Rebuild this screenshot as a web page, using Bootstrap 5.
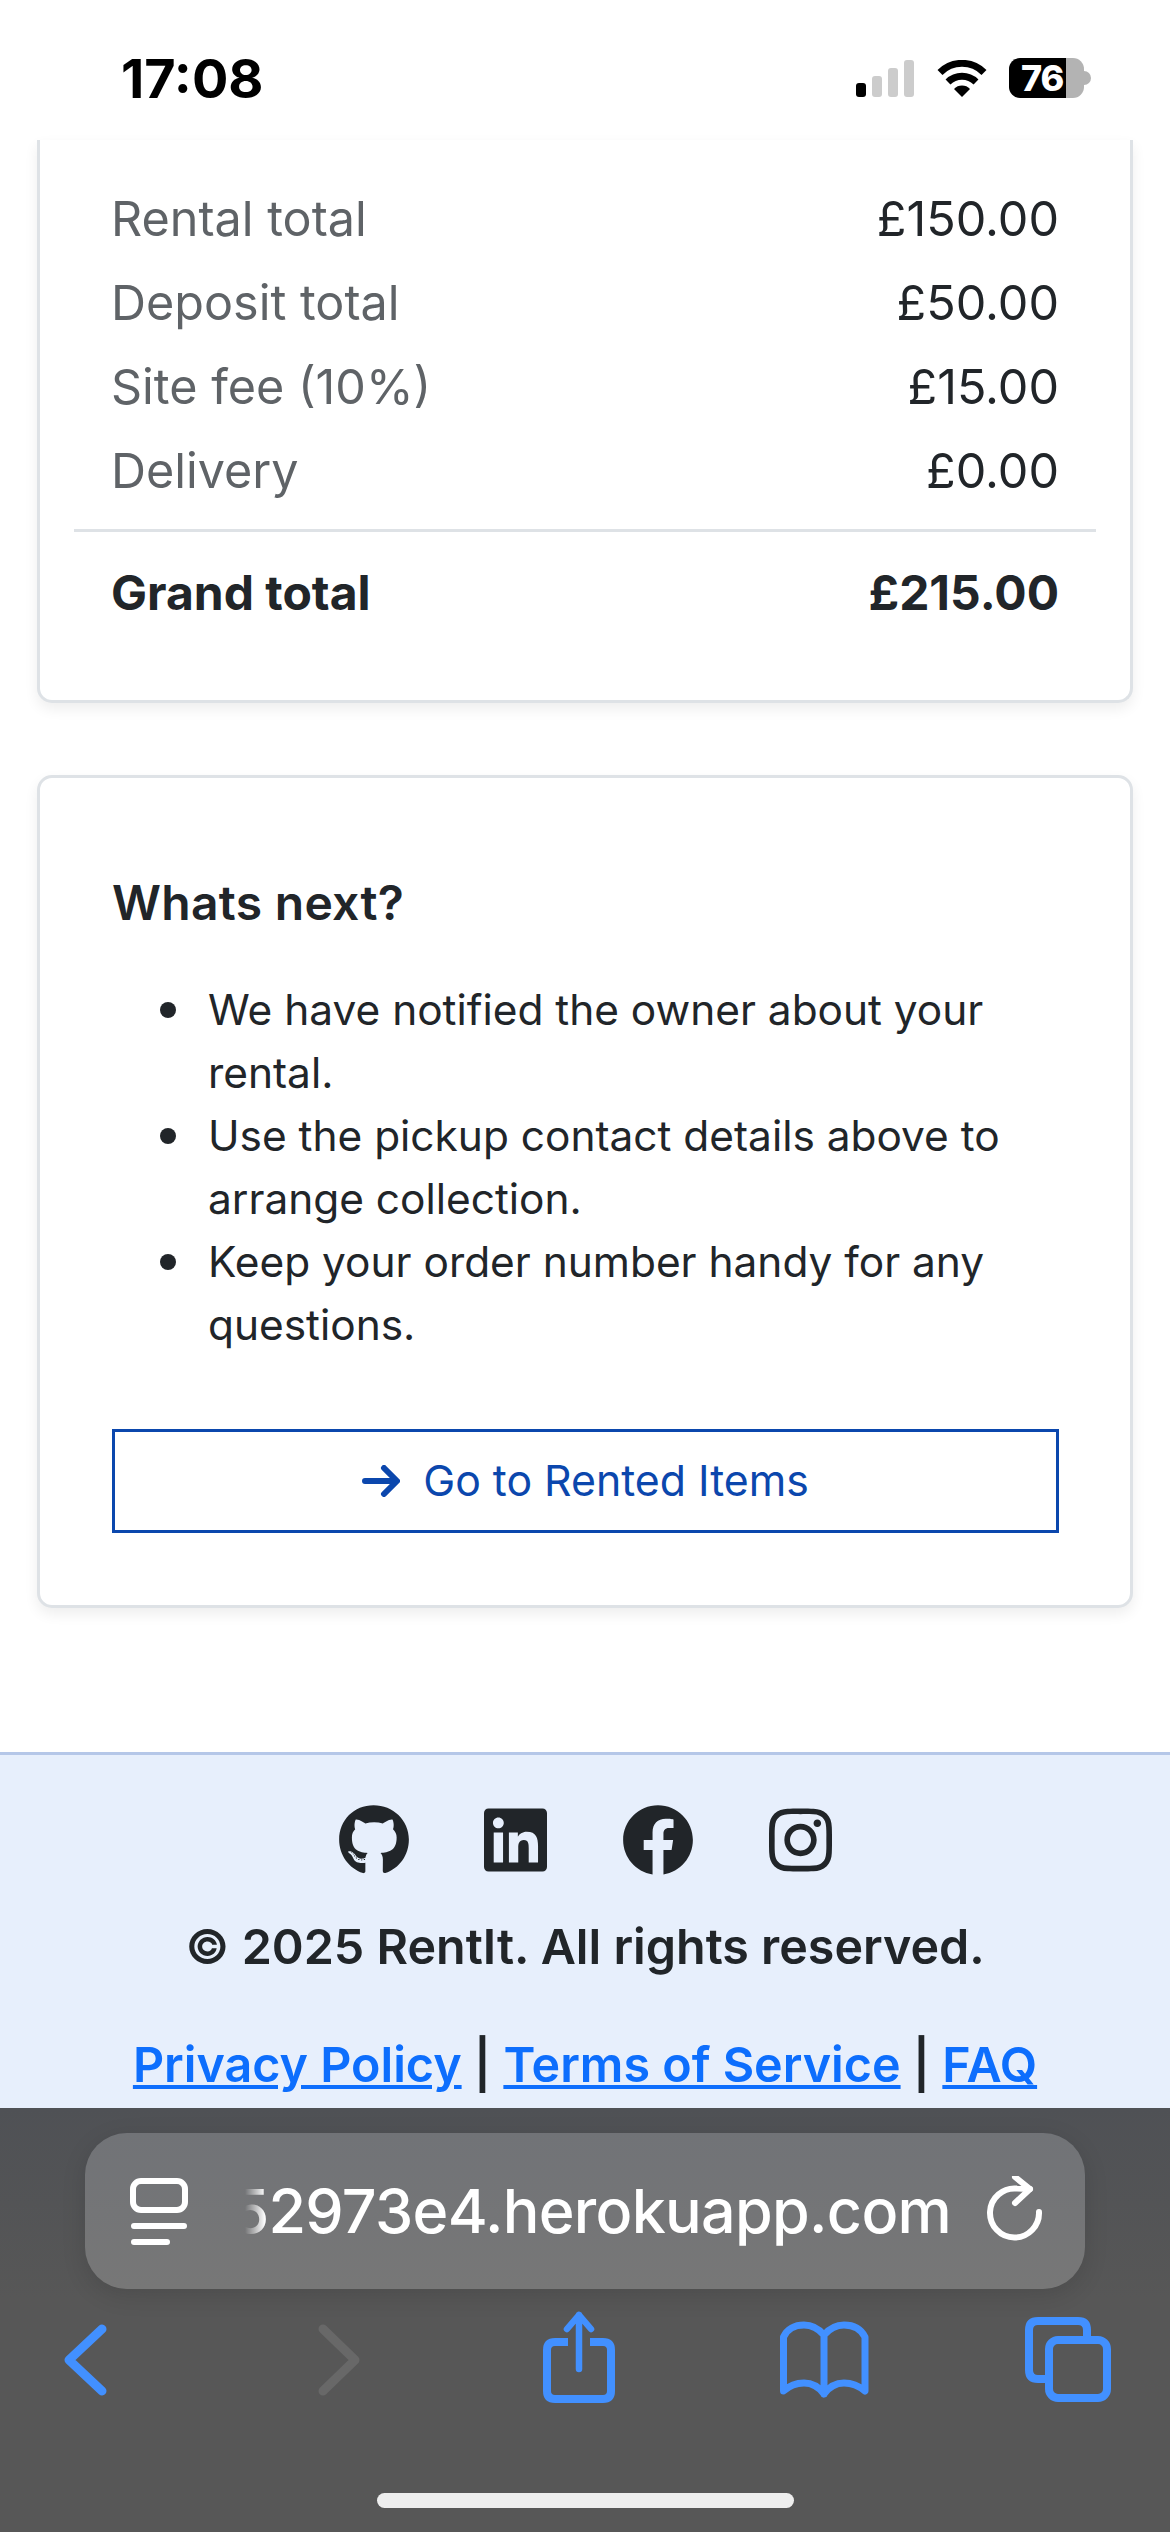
<!DOCTYPE html>
<html lang="en">
<head>
  <meta charset="UTF-8">
  <meta name="viewport" content="width=device-width, initial-scale=1.0">
  <title>Order confirmed - RentIt</title>
  <link href="https://cdn.jsdelivr.net/npm/bootstrap@5.3.0/dist/css/bootstrap.min.css" rel="stylesheet">
  <style>
    :root {
      --ink: #212529;
      --muted: #5f6367;
      --line: #dee2e6;
      --brand: #0b47ad;
    }

    body {
      font-family: "Inter", "Liberation Sans", sans-serif;
      color: var(--ink);
      background: #fff;
    }

    .phone-frame { height: 2532px; overflow: hidden; }

    /* Status bar */
    .status-strip { height: 140px; padding: 0 79px 0 121px; }
    .status-time { font-size: 54px; font-weight: 700; color: #000; line-height: 1; margin-top: 18px; }
    .status-icons { margin-top: 16px; }
    .signal-bars { gap: 6px; height: 37px; margin-right: 23px; }
    .signal-bars span { width: 10px; background: #ccc; border-radius: 3px; }
    .signal-bars span:nth-child(1) { height: 14px; background: #000; }
    .signal-bars span:nth-child(2) { height: 21px; }
    .signal-bars span:nth-child(3) { height: 29px; }
    .signal-bars span:nth-child(4) { height: 37px; }
    .battery-pill {
      width: 75px; height: 40px; margin-left: 22px; border-radius: 11px;
      background: linear-gradient(to right, #000 76%, #b3b3b3 76%);
      color: #fff; font-size: 36px; font-weight: 800; line-height: 40px;
      padding-left: 12px; letter-spacing: -1px; white-space: nowrap;
    }
    .battery-nub { width: 7px; height: 14px; background: #b3b3b3; border-radius: 0 7px 7px 0; }

    /* Page content */
    .page-scroll { min-height: 0; }
    .sheet { margin: 0 37px; border: 3px solid var(--line); border-radius: 15px; box-shadow: 0 6px 14px rgba(0, 0, 0, .07); }
    .sheet-totals { border-top: 0; border-top-left-radius: 0; border-top-right-radius: 0; padding: 37px 34px 68px; }
    .sheet-next { margin-top: 72px; padding: 96px 71px 72px 72px; }
    .money-row { height: 84px; font-size: 48.5px; padding: 0 37px; align-items: center; }
    .money-row .money-label { color: var(--muted); }
    .money-rule { border-top: 3px solid var(--line); margin: 16px 0 0; opacity: 1; height: 0; background: none; }
    .money-total { font-weight: 700; font-size: 48px; margin-top: 22px; height: 78px; }
    .money-total .money-label { color: var(--ink); }

    .next-title { font-family: "Inter", sans-serif; font-size: 48px; font-weight: 600; letter-spacing: .3px; line-height: 1.2; margin: 0 0 46px; }
    .next-list { font-size: 42.4px; line-height: 63px; padding-left: 96px; margin: 0 0 73px; list-style: none; }
    .next-list li { position: relative; }
    .next-list li::before {
      content: ""; position: absolute; left: -48px; top: 24px; width: 16px; height: 16px;
      border-radius: 50%; background: var(--ink);
    }
    .rented-btn {
      border: 3px solid var(--brand); border-radius: 0; color: var(--brand); font-size: 42.8px;
      height: 104px; gap: 23px; background: #fff;
    }

    /* Footer */
    .site-foot {
      margin-top: 144px; flex: 1 1 auto; background: #e7effc; border-top: 3px solid #b5c7e8;
      font-family: "Inter", sans-serif; font-weight: 600; font-size: 48.4px; overflow: hidden;
    }
    .foot-icons { height: 72px; margin-top: 49px; gap: 75px; }
    .foot-copy { margin: 35px 0 0; line-height: 72px; }
    .foot-links { margin: 46px 0 0; line-height: 72px; }
    .foot-links a { color: #0d6efd; }

    /* Safari chrome */
    .safari-bar { height: 424px; flex: none; background: linear-gradient(to bottom, #4f5155, #575757 45%); }
    .url-pill {
      height: 156px; margin: 25px 85px 0; border-radius: 42px; color: #fff; padding: 0 37px 0 45px;
      background: linear-gradient(to bottom, #717377, #777); box-shadow: 0 6px 24px rgba(0, 0, 0, .12);
    }
    .url-text {
      flex: none; margin: 0 36px 0 auto; white-space: nowrap; font-family: "Inter", sans-serif; font-weight: 500;
      font-size: 61px; letter-spacing: -.7px; line-height: 80px;
      -webkit-mask-image: linear-gradient(to right, transparent 14px, #000 34px);
      mask-image: linear-gradient(to right, transparent 14px, #000 34px);
    }
    .tool-row { padding-left: 35px; gap: 145px; margin-top: 18px; }
    .tool-row svg { flex: none; }
    .home-pill { width: 417px; height: 15px; border-radius: 8px; background: #eee; margin: 86px auto 0; }
  </style>
</head>

<body>
  <div class="phone-frame d-flex flex-column">

    <!-- iOS status bar -->
    <div class="status-strip d-flex justify-content-between align-items-center flex-none">
      <div class="status-time">17:08</div>
      <div class="status-icons d-flex align-items-center">
        <div class="signal-bars d-flex align-items-end"><span></span><span></span><span></span><span></span></div>
        <svg width="50" height="37" viewBox="0 0 50 37">
          <path d="M25 37l-8-8a11 11 0 0 1 16 0z" fill="#000"/>
          <path d="M11 22a20 20 0 0 1 28 0M3 12.500a31 31 0 0 1 44 0" fill="none" stroke="#000" stroke-width="7"/>
        </svg>
        <div class="battery-pill">76</div>
        <div class="battery-nub"></div>
      </div>
    </div>

    <div class="page-scroll flex-grow-1 d-flex flex-column">
      <div class="sheet sheet-totals card">
        <div class="money-row d-flex justify-content-between"><span class="money-label">Rental total</span><span>£150.00</span></div>
        <div class="money-row d-flex justify-content-between"><span class="money-label">Deposit total</span><span>£50.00</span></div>
        <div class="money-row d-flex justify-content-between"><span class="money-label">Site fee (10%)</span><span>£15.00</span></div>
        <div class="money-row d-flex justify-content-between"><span class="money-label">Delivery</span><span>£0.00</span></div>
        <hr class="money-rule">
        <div class="money-row money-total d-flex justify-content-between"><span class="money-label">Grand total</span><span>£215.00</span></div>
      </div>

      <div class="sheet sheet-next card">
        <h5 class="next-title">Whats next?</h5>
        <ul class="next-list">
          <li>We have notified the owner about your rental.</li>
          <li>Use the pickup contact details above to arrange collection.</li>
          <li>Keep your order number handy for any questions.</li>
        </ul>
        <a href="#" class="btn rented-btn d-flex align-items-center justify-content-center">
          <svg width="38" height="32" viewBox="0 0 38 32" fill="none" stroke="currentColor" stroke-width="6" stroke-linecap="round" stroke-linejoin="round"><path d="M3 16h31M22 3l13 13-13 13"/></svg>
          Go to Rented Items
        </a>
      </div>

      <footer class="site-foot text-center">
        <div class="foot-icons d-flex justify-content-center align-items-center">
          <svg width="70" height="72" viewBox="0 0 496 512" fill="currentColor"><path d="M165.900 397.400c0 2-2.300 3.600-5.200 3.600-3.300 0-5.600-1.600-5.600-3.600 0-2 2.300-3.600 5.200-3.600 3-.3 5.600 1.300 5.600 3.600zm-31.100-4.500c-.7 2 1.300 4.300 4.300 4.900 2.600 1 5.600 0 6.200-2s-1.300-4.300-4.300-5.200c-2.600-.7-5.500.3-6.200 2.300zm44.200-1.700c-2.900.7-4.900 2.600-4.600 4.900.3 2 2.900 3.300 5.900 2.600 2.900-.7 4.900-2.600 4.600-4.600-.3-1.900-3-3.200-5.900-2.900zM244.800 8C106.100 8 0 113.300 0 252c0 110.900 69.800 205.800 169.500 239.200 12.800 2.300 17.300-5.600 17.300-12.100 0-6.200-.3-40.400-.3-61.400 0 0-70 15-84.700-29.800 0 0-11.400-29.100-27.800-36.600 0 0-22.900-15.700 1.600-15.400 0 0 24.900 2 38.600 25.800 21.900 38.600 58.600 27.500 72.900 20.900 2.300-16 8.800-27.100 16-33.700-55.900-6.200-112.300-14.300-112.300-110.500 0-27.500 7.600-41.300 23.600-58.900-2.600-6.500-11.100-33.300 2.600-67.900 20.900-6.500 69 27 69 27 20-5.600 41.500-8.500 62.800-8.500s42.800 2.900 62.800 8.500c0 0 48.100-33.600 69-27 13.700 34.700 5.200 61.400 2.600 67.900 16 17.700 25.800 31.500 25.800 58.900 0 96.500-58.900 104.200-114.800 110.500 9.200 7.900 17 22.900 17 46.400 0 33.700-.3 75.400-.3 83.600 0 6.500 4.600 14.400 17.300 12.100C428.200 457.800 496 362.900 496 252 496 113.300 383.500 8 244.800 8zM97.200 352.900c-1.300 1-1 3.300.7 5.200 1.600 1.600 3.900 2.300 5.200 1 1.300-1 1-3.300-.7-5.200-1.600-1.600-3.900-2.300-5.200-1zm-10.800-8.100c-.7 1.300.3 2.900 2.300 3.900 1.600 1 3.600.7 4.300-.7.7-1.300-.3-2.900-2.300-3.900-2-.6-3.600-.3-4.300.7zm32.400 35.600c-1.600 1.300-1 4.300 1.300 6.200 2.300 2.300 5.200 2.600 6.500 1 1.300-1.300.7-4.300-1.300-6.200-2.200-2.300-5.200-2.600-6.500-1zm-11.400-14.700c-1.600 1-1.600 3.600 0 5.900 1.600 2.300 4.300 3.300 5.600 2.300 1.600-1.300 1.600-3.900 0-6.200-1.400-2.300-4-3.300-5.600-2z"/></svg>
          <svg width="63" height="72" viewBox="0 0 448 512" fill="currentColor"><path d="M416 32H31.900C14.300 32 0 46.500 0 64.300v383.400C0 465.500 14.300 480 31.900 480H416c17.600 0 32-14.500 32-32.300V64.300c0-17.800-14.400-32.300-32-32.300zM135.400 416H69V202.200h66.500V416zm-33.200-243c-21.300 0-38.500-17.300-38.500-38.500S80.900 96 102.200 96c21.200 0 38.500 17.300 38.500 38.500 0 21.300-17.200 38.500-38.500 38.500zm282.100 243h-66.400V312c0-24.800-.5-56.700-34.500-56.700-34.600 0-39.900 27-39.900 54.900V416h-66.400V202.200h63.700v29.200h.9c8.900-16.800 30.600-34.500 62.900-34.500 67.200 0 79.700 44.300 79.700 101.900V416z"/></svg>
          <svg width="72" height="72" viewBox="0 0 512 512" fill="currentColor"><path d="M504 256C504 119 393 8 256 8S8 119 8 256c0 123.780 90.690 226.380 209.250 245V327.690h-63V256h63v-54.640c0-62.150 37-96.480 93.670-96.480 27.140 0 55.520 4.840 55.520 4.840v61h-31.280c-30.800 0-40.410 19.120-40.410 38.730V256h68.780l-11 71.690h-57.780V501C413.310 482.380 504 379.780 504 256z"/></svg>
          <svg width="63" height="72" viewBox="0 0 448 512" fill="currentColor"><path d="M224.100 141c-63.600 0-114.900 51.300-114.900 114.900s51.300 114.900 114.900 114.900S339 319.500 339 255.900 287.700 141 224.100 141zm0 189.600c-41.100 0-74.700-33.500-74.700-74.700s33.500-74.700 74.700-74.700 74.700 33.500 74.700 74.700-33.600 74.700-74.700 74.700zm146.400-194.300c0 14.900-12 26.800-26.800 26.800-14.900 0-26.800-12-26.800-26.800s12-26.800 26.800-26.800 26.800 12 26.800 26.800zm76.100 27.200c-1.700-35.900-9.900-67.700-36.200-93.900-26.200-26.200-58-34.400-93.900-36.200-37-2.100-147.900-2.100-184.900 0-35.800 1.700-67.600 9.900-93.900 36.100s-34.400 58-36.200 93.900c-2.100 37-2.100 147.900 0 184.900 1.700 35.900 9.900 67.700 36.200 93.900s58 34.400 93.900 36.200c37 2.100 147.900 2.100 184.900 0 35.900-1.700 67.700-9.900 93.900-36.200 26.200-26.200 34.400-58 36.200-93.900 2.100-37 2.100-147.800 0-184.800zM398.800 388c-7.800 19.600-22.900 34.700-42.600 42.600-29.500 11.700-99.500 9-132.100 9s-102.700 2.600-132.100-9c-19.600-7.800-34.700-22.900-42.600-42.600-11.700-29.500-9-99.500-9-132.100s-2.600-102.700 9-132.100c7.800-19.600 22.900-34.700 42.600-42.600 29.500-11.700 99.500-9 132.100-9s102.700-2.600 132.100 9c19.600 7.800 34.700 22.900 42.600 42.600 11.700 29.500 9 99.500 9 132.100s2.700 102.700-9 132.100z"/></svg>
        </div>
        <p class="foot-copy">© 2025 RentIt. All rights reserved.</p>
        <p class="foot-links"><a href="#">Privacy Policy</a> | <a href="#">Terms of Service</a> | <a href="#">FAQ</a></p>
      </footer>
    </div>

    <!-- Safari bottom bar -->
    <div class="safari-bar">
      <div class="url-pill d-flex align-items-center">
        <svg width="58" height="68" viewBox="0 0 58 68" fill="none" stroke="#fff" stroke-width="6" stroke-linecap="round" class="flex-shrink-0">
          <rect x="3" y="4" width="52" height="29" rx="8"/>
          <path d="M4 49h50M4 65h33"/>
        </svg>
        <div class="url-text"><span>52973e4.herokuapp.com</span></div>
        <svg width="61" height="70" viewBox="-3 0 61 70" fill="none" stroke="#fff" stroke-width="6" stroke-linecap="round" stroke-linejoin="round" class="flex-shrink-0">
          <path d="M49 36A24.500 24.500 0 1 1 27 12.600L40 13"/>
          <path d="M25 1l15 12-15 14"/>
        </svg>
      </div>
      <div class="tool-row d-flex">
        <svg width="100" height="100" viewBox="0 0 100 100" fill="none" stroke="#4290ff" stroke-width="9" stroke-linecap="round" stroke-linejoin="round"><path d="M67 22L34 53l33 31"/></svg>
        <svg width="100" height="100" viewBox="0 0 100 100" fill="none" stroke="#686868" stroke-width="9" stroke-linecap="round" stroke-linejoin="round"><path d="M43 22l32 31-32 31"/></svg>
        <svg width="100" height="100" viewBox="0 0 100 100" fill="none" stroke="#4290ff" stroke-width="8" stroke-linejoin="round">
          <path d="M43 35H30q-8 0-8 8v41q0 8 8 8h48q8 0 8-8V43q0-8-8-8H65"/>
          <path d="M54 8v54M42 22L54 8l12 14" stroke-width="6.500" stroke-linecap="round"/>
        </svg>
        <svg width="100" height="100" viewBox="0 0 100 100" fill="none" stroke="#4290ff" stroke-width="7" stroke-linecap="round" stroke-linejoin="round">
          <path d="M54 28C48 21 41 18 34 18 25 18 17 22 13.500 30V84C19 79 26 76 34 76 42 76 49 80 54 87 59 80 66 76 74 76 82 76 89 79 95 84V30C91 22 83 18 74 18 67 18 60 21 54 28V87"/>
        </svg>
        <svg width="100" height="100" viewBox="0 0 100 100" fill="none" stroke="#4290ff" stroke-width="8" stroke-linejoin="round">
          <path d="M30 72H23q-9 0-9-9V23q0-9 9-9h40q9 0 9 9v6"/>
          <rect x="34" y="33" width="58" height="58" rx="9"/>
        </svg>
      </div>
      <div class="home-pill"></div>
    </div>
  </div>

  <script src="https://cdn.jsdelivr.net/npm/bootstrap@5.3.0/dist/js/bootstrap.bundle.min.js"></script>
</body>
</html>
